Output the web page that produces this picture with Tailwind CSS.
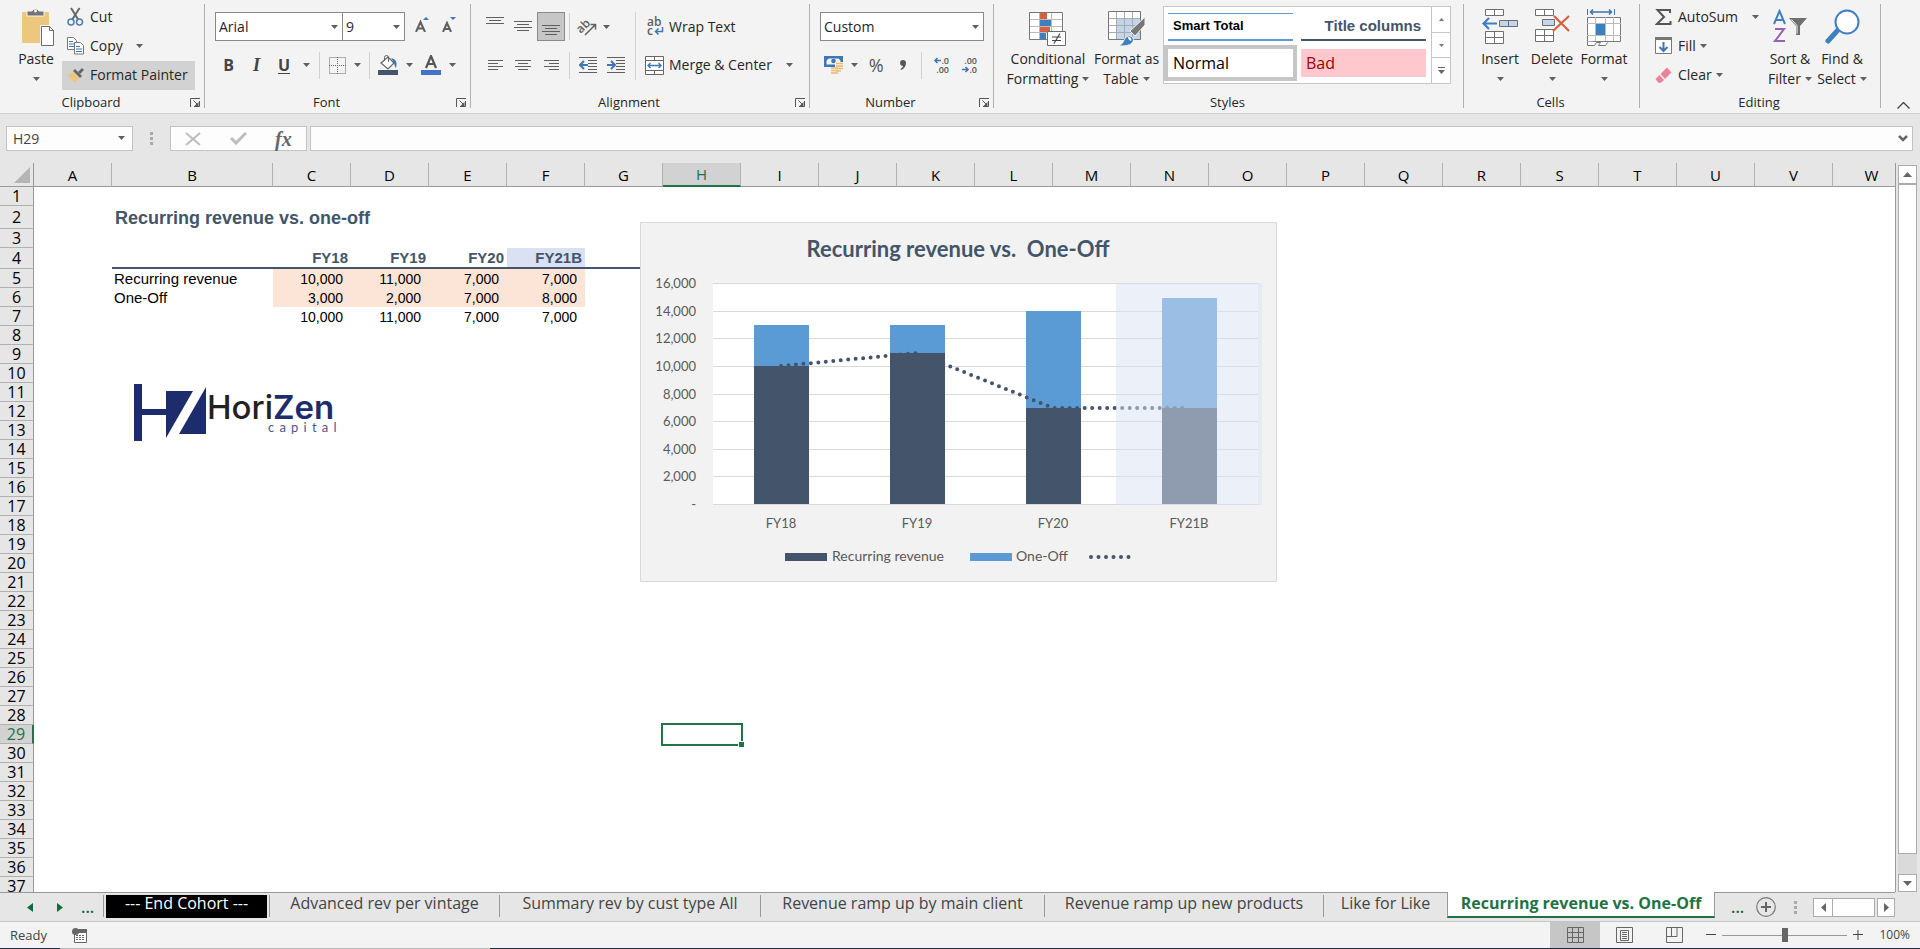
<!DOCTYPE html>
<html lang="en">
<head>
  <meta charset="UTF-8">
  <meta name="viewport" content="width=device-width, initial-scale=1.0">
  <script src="https://cdn.jsdelivr.net/npm/@tailwindcss/browser@4"></script>
  <title>Recurring revenue vs. One-Off</title>
</head>
<body class="h-screen flex flex-col overflow-hidden bg-[#e6e6e6] text-[#262626] text-sm font-['Open_Sans','Noto_Sans',sans-serif]">

  <!-- Shared symbols -->
  <svg class="hidden">
    <symbol id="caret" viewBox="0 0 7 4"><path d="M0 0h7L3.5 4z" fill="#5f5f5f"/></symbol>
    <symbol id="launcher" viewBox="0 0 10 9"><path d="M.5 9V.5H10M3.5 2.500l4 4M9.500 3v5.500H4" fill="none" stroke="#555"/><path d="M8.500 4v4h-4z" fill="#555"/></symbol>
  </svg>

  <!-- Ribbon -->
  <header class="shrink-0 flex h-[114px] bg-[#f3f3f3] border-b border-[#cfcfcf]">

    <!-- Clipboard -->
    <section class="w-[204px] shrink-0 flex flex-col pt-[3px]">
      <div class="flex h-[87px]">
        <button class="w-[62px] pl-2.5 flex flex-col items-center">
          <svg class="w-[36px] h-[46px]" viewBox="0 0 36 46">
            <rect x="4" y="9" width="27" height="31" rx="1" fill="#eec77e"/>
            <path d="M9 13V8h5a4 4 0 0 1 7 0h5v5z" fill="#737373" stroke="#f3f3f3"/>
            <circle cx="17.500" cy="8" r="1.500" fill="#f3f3f3"/>
            <path d="M22 22h11l5 5v17H22z" fill="#f3f3f3"/>
            <path d="M23.500 23.500h8l4 4v15h-12z" fill="#fff" stroke="#6b6b6b"/>
            <path d="M31.500 23.500v4h4" fill="none" stroke="#6b6b6b"/>
          </svg>
          <span class="leading-5">Paste</span>
          <span class="h-5 flex items-center"><svg class="w-[7px] h-1"><use href="#caret"/></svg></span>
        </button>
        <div class="w-[133px] flex flex-col">
          <button class="h-[29px] pb-0.5 pl-[5px] flex items-center gap-1.5">
            <svg class="w-[17px] h-[19px]" viewBox="0 0 17 19"><path d="M4 1l7.500 12M12.500 1L5 13" stroke="#666" stroke-width="2" fill="none"/><circle cx="4" cy="15" r="3" fill="none" stroke="#4a7fb5" stroke-width="1.500"/><circle cx="12.500" cy="15" r="3" fill="none" stroke="#4a7fb5" stroke-width="1.500"/></svg>
            Cut
          </button>
          <button class="h-[29px] pb-0.5 pl-[5px] flex items-center gap-1.5">
            <svg class="w-[17px] h-[19px]" viewBox="0 0 17 19"><path d="M.5 1.500h6l3 3v9h-9z" fill="#fff" stroke="#777"/><path d="M2 5.500h4M2 8h5M2 10.500h5" stroke="#3f76b5"/><path d="M7.500 6.500h6l3 3v8.500h-9z" fill="#fff" stroke="#777"/><path d="M9 10.500h4M9 13h6M9 15.500h6" stroke="#3f76b5"/></svg>
            Copy
            <svg class="w-[7px] h-1 ml-[7px]"><use href="#caret"/></svg>
          </button>
          <button class="h-[29px] pb-0.5 pl-[5px] flex items-center gap-1.5 bg-[#d2d2d2] whitespace-nowrap">
            <svg class="w-[17px] h-[17px]" viewBox="0 0 17 17"><path d="M0 9l6-3 6 6-4 5z" fill="#eec77e"/><path d="M6 5l2-2 7 7-2 2z" fill="#666"/><path d="M11 6l4-4 2 2-4 4z" fill="#666"/></svg>
            Format Painter
          </button>
        </div>
      </div>
      <div class="flex items-center h-[23px] pt-0.5 pr-1 text-[13px]"><span class="flex-1 text-center pr-2">Clipboard</span><button aria-label="Clipboard settings"><svg class="w-2.5 h-[9px]"><use href="#launcher"/></svg></button></div>
    </section>
    <div class="w-px h-[104px] mt-1 bg-[#b1b1b1]"></div>

    <!-- Font -->
    <section class="w-[265px] shrink-0 flex flex-col pt-[3px]">
      <div class="h-[87px] pl-2.5 pt-[9px] flex flex-col gap-2">
        <div class="flex h-[29px]">
          <div class="relative"><select aria-label="Font" class="appearance-none w-[128px] h-[29px] pl-[3px] bg-white border border-[#8a8a8a]"><option>Arial</option></select><svg class="absolute right-[5px] top-[13px] w-[7px] h-1 pointer-events-none"><use href="#caret"/></svg></div>
          <div class="relative"><select aria-label="Font size" class="appearance-none w-[62px] h-[29px] pl-[3px] bg-white border border-l-0 border-[#8a8a8a]"><option>9</option></select><svg class="absolute right-[5px] top-[13px] w-[7px] h-1 pointer-events-none"><use href="#caret"/></svg></div>
          <button class="w-[27px] flex items-center justify-center pl-1.5 pb-1" aria-label="Grow font"><svg class="w-[14px] h-[15px]" viewBox="0 0 14 15"><path d="M1 15L5.500 5l4.500 10M2.500 11.500h6" fill="none" stroke="#5f5f5f" stroke-width="2"/><path d="M8 3l3-3 3 3z" fill="#3f76b5"/></svg></button>
          <button class="w-[27px] flex items-center justify-center pl-1.5 pb-1" aria-label="Shrink font"><svg class="w-[14px] h-[15px]" viewBox="0 0 14 15"><path d="M1 15L5 6l4 9M2.500 12h5" fill="none" stroke="#5f5f5f" stroke-width="2"/><path d="M8 0h6l-3 3z" fill="#3f76b5"/></svg></button>
        </div>
        <div class="flex items-center h-[32px] text-base text-[#444]">
          <button class="w-[27px] font-bold">B</button>
          <button class="w-[29px] font-bold italic font-['Liberation_Serif',serif] text-lg">I</button>
          <button class="w-[26px] font-bold underline underline-offset-2">U</button>
          <button class="w-[18px] flex justify-center" aria-label="Underline options"><svg class="w-[7px] h-1"><use href="#caret"/></svg></button>
          <div class="w-px h-[27px] mx-1 bg-[#d2d2d2]"></div>
          <button class="w-[26px] flex justify-center" aria-label="Borders"><svg class="w-[17px] h-[17px]" viewBox="0 0 17 17"><path d="M.5 .5h16v16H.5zM8.500 0v17M0 8.500h17" fill="none" stroke="#666" stroke-dasharray="1 1"/></svg></button>
          <button class="w-[15px] flex justify-center" aria-label="Border options"><svg class="w-[7px] h-1"><use href="#caret"/></svg></button>
          <div class="w-px h-[27px] mx-1 bg-[#d2d2d2]"></div>
          <button class="w-[28px] flex justify-center" aria-label="Fill colour"><svg class="w-5 h-5" viewBox="0 0 20 20"><path d="M3 8l7-6 6 6-6 6z" fill="#fff" stroke="#666" stroke-width="1.200"/><path d="M6.500 6V2.500a2 2 0 0 1 4 0V7" fill="none" stroke="#666"/><path d="M13 3c5 1 6.500 4 5 10-1-1-2-4-2-5z" fill="#3f76b5"/><path d="M0 15h20v5H0z" fill="#44546a"/></svg></button>
          <button class="w-[15px] flex justify-center" aria-label="Fill colour options"><svg class="w-[7px] h-1"><use href="#caret"/></svg></button>
          <button class="w-[28px] flex justify-center" aria-label="Font colour"><svg class="w-5 h-5" viewBox="0 0 20 20"><path d="M5 13L10 1l5 12M6.500 9h7" fill="none" stroke="#555" stroke-width="2.200"/><path d="M0 15h20v5H0z" fill="#4472c4"/></svg></button>
          <button class="w-[14px] flex justify-center" aria-label="Font colour options"><svg class="w-[7px] h-1"><use href="#caret"/></svg></button>
        </div>
      </div>
      <div class="flex items-center h-[23px] pt-0.5 pr-1 text-[13px]"><span class="flex-1 text-center pr-2">Font</span><button aria-label="Font settings"><svg class="w-2.5 h-[9px]"><use href="#launcher"/></svg></button></div>
    </section>
    <div class="w-px h-[104px] mt-1 bg-[#b1b1b1]"></div>

    <!-- Alignment -->
    <section class="w-[338px] shrink-0 flex flex-col pt-[3px]">
      <div class="flex h-[87px] pl-2.5 pt-[9px]">
        <div class="flex flex-col gap-2.5">
          <div class="flex items-center h-[29px]">
            <button class="w-7 h-[29px] flex justify-center pt-[5px]" aria-label="Top align"><svg class="w-[18px] h-2" viewBox="0 0 18 8"><path d="M0 .5h18M3 3.500h12M0 6.500h18" stroke="#5f5f5f"/></svg></button>
            <button class="w-7 h-[29px] flex justify-center items-center" aria-label="Middle align"><svg class="w-[18px] h-[11px]" viewBox="0 0 18 11"><path d="M0 .5h18M3 3.500h12M0 6.500h18M3 9.500h12" stroke="#5f5f5f"/></svg></button>
            <button class="w-7 h-[29px] flex justify-center items-end pb-1 bg-[#c6c6c6] border border-[#8a8a8a]" aria-label="Bottom align"><svg class="w-[18px] h-[11px]" viewBox="0 0 18 11"><path d="M0 .5h18M3 3.500h12M0 6.500h18M3 9.500h12" stroke="#5f5f5f"/></svg></button>
            <div class="w-px h-[27px] mx-1 bg-[#d2d2d2]"></div>
            <button class="w-[26px] flex justify-center" aria-label="Orientation"><svg class="w-5 h-5 overflow-visible" viewBox="0 0 20 20"><text x="0" y="12" transform="rotate(-45 8 10)" font-size="12" font-weight="600" fill="#5f5f5f">ab</text><path d="M8 18L18 8M13.500 7.500H18.500V12.500" fill="none" stroke="#5f5f5f" stroke-width="1.500"/></svg></button>
            <button class="w-3 flex justify-center" aria-label="Orientation options"><svg class="w-[7px] h-1"><use href="#caret"/></svg></button>
          </div>
          <div class="flex items-center h-[28px]">
            <button class="w-7 flex justify-center" aria-label="Align left"><svg class="w-[15px] h-3" viewBox="0 0 15 12"><path d="M0 1.500h15M0 4.500h10M0 7.500h15M0 10.500h10" stroke="#5f5f5f"/></svg></button>
            <button class="w-7 flex justify-center" aria-label="Center"><svg class="w-4 h-3" viewBox="0 0 16 12"><path d="M0 1.500h16M3 4.500h10M0 7.500h16M3 10.500h10" stroke="#5f5f5f"/></svg></button>
            <button class="w-7 flex justify-center" aria-label="Align right"><svg class="w-[15px] h-3" viewBox="0 0 15 12"><path d="M0 1.500h15M5 4.500h10M0 7.500h15M5 10.500h10" stroke="#5f5f5f"/></svg></button>
            <div class="w-px h-[27px] mx-1 bg-[#d2d2d2]"></div>
            <button class="w-7 flex justify-center" aria-label="Decrease indent"><svg class="w-[18px] h-4" viewBox="0 0 18 16"><path d="M0 .5h18M9 3.500h9M9 6.500h9M9 9.500h9M9 12.500h9M0 15.500h18" stroke="#5f5f5f"/><path d="M9 8H1.500M5 4L1 8l4 4" fill="none" stroke="#3f76b5" stroke-width="2"/></svg></button>
            <button class="w-7 flex justify-center" aria-label="Increase indent"><svg class="w-[18px] h-4" viewBox="0 0 18 16"><path d="M0 .5h18M9 3.500h9M9 6.500h9M9 9.500h9M9 12.500h9M0 15.500h18" stroke="#5f5f5f"/><path d="M0 8h7M4 4l4 4-4 4" fill="none" stroke="#3f76b5" stroke-width="2"/></svg></button>
          </div>
        </div>
        <div class="w-px h-[68px] ml-[5px] mr-[9px] bg-[#d2d2d2]"></div>
        <div class="flex flex-col gap-2.5">
          <button class="flex items-center gap-1 h-[29px]">
            <svg class="w-5 h-5 overflow-visible" viewBox="0 0 20 20"><text x="2" y="9" font-size="12" font-weight="600" fill="#5f5f5f">ab</text><text x="2" y="18" font-size="12" font-weight="600" fill="#5f5f5f">c</text><path d="M17.500 10v4.500H11M13.500 11.500l-3 3 3 3" fill="none" stroke="#3f76b5" stroke-width="1.500"/></svg>
            Wrap Text
          </button>
          <button class="flex items-center gap-1 h-[28px]">
            <svg class="w-5 h-[19px]" viewBox="0 0 20 19"><path d="M.5 .5h18v18H.5z" fill="#fff" stroke="#666"/><path d="M0 4.500h19M0 14.500h19M9.500 0v4M9.500 15v4" stroke="#666"/><path d="M3 9.500h13M5.500 7L3 9.500 5.500 12M13.500 7l2.500 2.500-2.500 2.500" fill="none" stroke="#3f76b5" stroke-width="1.400"/></svg>
            Merge &amp; Center
            <svg class="w-[7px] h-1 ml-2.5"><use href="#caret"/></svg>
          </button>
        </div>
      </div>
      <div class="flex items-center h-[23px] pt-0.5 pr-1 text-[13px]"><span class="flex-1 text-center pr-2">Alignment</span><button aria-label="Alignment settings"><svg class="w-2.5 h-[9px]"><use href="#launcher"/></svg></button></div>
    </section>
    <div class="w-px h-[104px] mt-1 bg-[#b1b1b1]"></div>

    <!-- Number -->
    <section class="w-[183px] shrink-0 flex flex-col pt-[3px]">
      <div class="h-[87px] pl-2.5 pr-[9px] pt-[9px] flex flex-col gap-2.5">
        <div class="relative"><select aria-label="Number format" class="appearance-none w-full h-[29px] pl-[3px] bg-white border border-[#8a8a8a]"><option>Custom</option></select><svg class="absolute right-[5px] top-[13px] w-[7px] h-1 pointer-events-none"><use href="#caret"/></svg></div>
        <div class="flex items-center h-[28px]">
          <button class="w-7 flex justify-center" aria-label="Accounting format"><svg class="w-5 h-5" viewBox="0 0 20 20"><path d="M0 1h19v11H0z" fill="#3f76b5"/><path d="M2.500 3.500h14v6h-14z" fill="#f3f3f3"/><path d="M2 3l3 0-3 3zM17 3h-3l3 3z" fill="#3f76b5"/><circle cx="9.500" cy="6" r="2.300" fill="#3f76b5"/><path d="M11 7h9v10h-5v3H6v-8h5z" fill="#f3f3f3"/><path d="M12 8.500h7M12 11h7M12 13.500h7M12 16h5M7 13h7M7 15.500h7M7 18h7" stroke="#ecbd6b" stroke-width="1.600"/></svg></button>
          <button class="w-[14px] flex justify-center" aria-label="Accounting options"><svg class="w-[7px] h-1"><use href="#caret"/></svg></button>
          <button class="w-[29px] text-lg text-[#555]">%</button>
          <button class="w-[26px] flex justify-center" aria-label="Comma style"><svg class="w-[7px] h-[10px]" viewBox="0 0 7 10"><path d="M3 0a3 3 0 0 1 3 3c0 3-2 6-5 7l-.5-1c1.500-.8 2.500-2 2.500-3.200A2.900 2.900 0 1 1 3 0" fill="#555"/></svg></button>
          <div class="w-px h-[27px] ml-[5px] mr-1.5 bg-[#d2d2d2]"></div>
          <button class="w-[27px] flex justify-center" aria-label="Increase decimal"><svg class="w-4 h-[18px] overflow-visible" viewBox="0 0 16 18"><text x="15" y="8" text-anchor="end" font-size="9" font-weight="600" fill="#555">.0</text><text x="15" y="17" text-anchor="end" font-size="9" font-weight="600" fill="#555">.00</text><path d="M7 4.500H1M3.500 2L1 4.500 3.500 7" fill="none" stroke="#3f76b5" stroke-width="1.600"/></svg></button>
          <button class="w-[29px] flex justify-center" aria-label="Decrease decimal"><svg class="w-4 h-[18px] overflow-visible" viewBox="0 0 16 18"><text x="15" y="8" text-anchor="end" font-size="9" font-weight="600" fill="#555">.00</text><text x="15" y="17" text-anchor="end" font-size="9" font-weight="600" fill="#555">.0</text><path d="M0 13.500h6M3.500 11L6 13.500 3.500 16" fill="none" stroke="#3f76b5" stroke-width="1.600"/></svg></button>
        </div>
      </div>
      <div class="flex items-center h-[23px] pt-0.5 pr-1 text-[13px]"><span class="flex-1 text-center pr-2">Number</span><button aria-label="Number settings"><svg class="w-2.5 h-[9px]"><use href="#launcher"/></svg></button></div>
    </section>
    <div class="w-px h-[104px] mt-1 bg-[#b1b1b1]"></div>

    <!-- Styles -->
    <section class="w-[469px] shrink-0 flex flex-col pt-[3px]">
      <div class="flex h-[87px] pl-2.5">
        <button class="w-[88px] flex flex-col items-center whitespace-nowrap">
          <span class="h-[46px] pt-1 flex items-center"><svg class="w-[38px] h-9" viewBox="0 0 38 36"><path d="M.5 2.500h34v27H.5z" fill="#fff"/><path d="M11 2h7v7h-7zM11 16h10v7H11z" fill="#d8603f"/><path d="M11 9h11v7H11zM11 23h6v7h-6z" fill="#3f7fbf"/><path d="M0 9.500h34M0 16.500h34M0 22.500h34M10.500 2v28M22.500 2v28" stroke="#bbb"/><path d="M.5 2.500h33v27H.5z" fill="none" stroke="#777"/><path d="M18.500 21.500h18v14h-18z" fill="#fff" stroke="#6b6b6b"/><path d="M23 27h9M23 30.500h9M31 23.500l-6 10" stroke="#444" stroke-width="1.200"/></svg></span>
          <span class="leading-5">Conditional</span>
          <span class="leading-5 flex items-center gap-1">Formatting <svg class="w-[7px] h-1"><use href="#caret"/></svg></span>
        </button>
        <button class="w-[69px] flex flex-col items-center whitespace-nowrap">
          <span class="h-[46px] pt-1 flex items-center"><svg class="w-[38px] h-9" viewBox="0 0 38 36"><path d="M.5 1.500h32v28H.5z" fill="#fff"/><path d="M8 9h25v21H8z" fill="#c3d5ea"/><path d="M0 8.500h33M0 15.500h33M0 22.500h33M8.500 1v29M16.500 1v29M24.500 1v29" stroke="#aaa"/><path d="M.5 1.500h32v28H.5z" fill="none" stroke="#777"/><path d="M37 7v8L27 26l-5-5z" fill="#777" stroke="#f3f3f3"/><path d="M10 36c6-1 5-8 10-10 5-1 7 4 4 7-3 3-8 3-14 3z" fill="#3f7fbf" stroke="#f3f3f3"/><path d="M20 27c3 0 4 2 3 4-2-1-3-2-3-4" fill="#fff"/></svg></span>
          <span class="leading-5">Format as</span>
          <span class="leading-5 flex items-center gap-1">Table <svg class="w-[7px] h-1"><use href="#caret"/></svg></span>
        </button>
        <div class="flex h-[78px] mt-[3px] ml-0.5 bg-white border border-[#c6c6c6]">
          <div class="grid grid-cols-[125px_125px] grid-rows-[28px_28px] gap-2 pl-1 pt-1.5 pr-1">
            <button class="text-left pl-[5px] text-[13px] font-bold text-black font-['Liberation_Sans',sans-serif] border-t border-b-2 border-[#5b9bd5]">Smart Total</button>
            <button class="text-right pr-[5px] text-[15px] font-bold text-[#44546a] font-['Liberation_Sans',sans-serif] border-b-2 border-[#44546a]">Title columns</button>
            <button class="text-left pl-[5px] text-base text-black bg-white outline-4 outline-[#c6c6c6]">Normal</button>
            <button class="text-left pl-[5px] text-base text-[#9c0006] bg-[#ffc7ce]">Bad</button>
          </div>
          <div class="w-[19px] ml-px flex flex-col border-l border-[#c6c6c6] divide-y divide-[#c6c6c6]">
            <button class="flex-1 flex items-center justify-center" aria-label="Previous styles"><svg class="w-[5px] h-[3px]" viewBox="0 0 5 3"><path d="M0 3h5L2.500 0z" fill="#777"/></svg></button>
            <button class="flex-1 flex items-center justify-center" aria-label="Next styles"><svg class="w-[5px] h-[3px]" viewBox="0 0 5 3"><path d="M0 0h5L2.500 3z" fill="#777"/></svg></button>
            <button class="flex-1 flex items-center justify-center" aria-label="More styles"><svg class="w-[7px] h-[7px]" viewBox="0 0 7 7"><path d="M0 0h7v1H0zM0 3h7L3.500 7z" fill="#666"/></svg></button>
          </div>
        </div>
      </div>
      <div class="flex items-center justify-center h-[23px] pt-0.5 pr-0.5 text-[13px]">Styles</div>
    </section>
    <div class="w-px h-[104px] mt-1 bg-[#b1b1b1]"></div>

    <!-- Cells -->
    <section class="w-[175px] shrink-0 flex flex-col pt-[3px]">
      <div class="flex h-[87px] pl-2.5">
        <button class="w-[52px] flex flex-col items-center">
          <span class="h-[46px] pt-0.5 flex items-center"><svg class="w-9 h-9" viewBox="0 0 36 36"><g fill="#fff" stroke="#6f6f6f"><path d="M3.500 .5h18v6h-18zM12.500 .5v6M3.500 22.500h18v12h-18zM12.500 22.500v12M3.500 28.500h18"/><path d="M17.500 11.500h18v6h-18zM26.500 11.500v6" fill="#c3d5ea"/></g><path d="M15 14.500H2M7 9l-5.500 5.500L7 20" fill="none" stroke="#3f7fbf" stroke-width="2.200"/></svg></span>
          <span class="leading-5">Insert</span>
          <span class="h-5 flex items-center"><svg class="w-[7px] h-1"><use href="#caret"/></svg></span>
        </button>
        <button class="w-[52px] flex flex-col items-center">
          <span class="h-[46px] pt-0.5 flex items-center"><svg class="w-9 h-9" viewBox="0 0 36 36"><g fill="#fff" stroke="#6f6f6f"><path d="M1.500 .5h18v6h-18zM10.500 .5v6M1.500 20.500h18v12h-18zM10.500 20.500v12M1.500 26.500h18"/><path d="M8.500 10.500h12v6h-12z" fill="#c3d5ea"/></g><path d="M20 7l15 15M35 7L19 22" fill="none" stroke="#d8603f" stroke-width="2.200"/></svg></span>
          <span class="leading-5">Delete</span>
          <span class="h-5 flex items-center"><svg class="w-[7px] h-1"><use href="#caret"/></svg></span>
        </button>
        <button class="w-[52px] flex flex-col items-center">
          <span class="h-[46px] pt-1 flex items-center"><svg class="w-9 h-10" viewBox="0 0 36 40"><path d="M1.500 9.500h33v24h-33z" fill="#fff" stroke="#777"/><path d="M1 15.500h34M1 27.500h34M9.500 9v24M19.500 9v24M27.500 9v24" stroke="#bbb"/><path d="M1.500 33.500v4h7l2-3h4l-2 3h7l2-3" fill="#fff" stroke="#777"/><path d="M10 16h9v11h-9z" fill="#3f7fbf"/><path d="M1.500 1v6M28.500 1v6" stroke="#3f76b5"/><path d="M4 4h22M7 1.500L4.500 4 7 6.500M23 1.500L25.500 4 23 6.500" fill="none" stroke="#3f76b5" stroke-width="1.600"/></svg></span>
          <span class="leading-5">Format</span>
          <span class="h-5 flex items-center"><svg class="w-[7px] h-1"><use href="#caret"/></svg></span>
        </button>
      </div>
      <div class="flex items-center justify-center h-[23px] pt-0.5 pr-0.5 text-[13px]">Cells</div>
    </section>
    <div class="w-px h-[104px] mt-1 bg-[#b1b1b1]"></div>

    <!-- Editing -->
    <section class="w-[240px] shrink-0 flex flex-col pt-[3px]">
      <div class="flex h-[87px] pl-[15px] whitespace-nowrap">
        <div class="w-[109px] flex flex-col">
          <button class="h-[29px] pb-0.5 flex items-center gap-1.5">
            <svg class="w-[17px] h-4" viewBox="0 0 17 16"><path d="M15 4V1H2.500L9 8l-7 7h13.500v-3" fill="none" stroke="#555" stroke-width="2"/></svg>
            AutoSum
            <svg class="w-[7px] h-1 ml-2"><use href="#caret"/></svg>
          </button>
          <button class="h-[29px] pb-0.5 flex items-center gap-1.5">
            <svg class="w-[17px] h-[17px]" viewBox="0 0 17 17"><path d="M.5 .5h16v16H.5z" fill="#fff" stroke="#777"/><path d="M0 0h17v3H0z" fill="#777"/><path d="M8.500 5v9M4.500 10l4 4 4-4" fill="none" stroke="#3f76b5" stroke-width="2"/></svg>
            Fill
            <svg class="w-[7px] h-1 -ml-0.5"><use href="#caret"/></svg>
          </button>
          <button class="h-[29px] pb-0.5 flex items-center gap-1.5">
            <svg class="w-[17px] h-4" viewBox="0 0 17 16"><path d="M5.500 7L12 .5l4.500 5L10 12z" fill="#e8839a"/><path d="M4.500 8l4.500 5-2.500 2.500L3.500 16 .5 12z" fill="#e8839a"/></svg>
            Clear
            <svg class="w-[7px] h-1 -ml-0.5"><use href="#caret"/></svg>
          </button>
        </div>
        <button class="w-[52px] flex flex-col items-center">
          <span class="h-[46px] flex items-center"><svg class="w-[36px] h-9" viewBox="0 0 36 36"><path d="M2 16L7.500 3 13 16M4 12h7" fill="none" stroke="#3f7fbf" stroke-width="2"/><path d="M3 21h9L3 33h10" fill="none" stroke="#9563b5" stroke-width="2"/><path d="M17 10h18l-7 8v9h-4v-9z" fill="#6f6f6f"/><path d="M19.500 11.500l5.500 6v8" fill="none" stroke="#f3f3f3"/></svg></span>
          <span class="leading-5">Sort &amp;</span>
          <span class="leading-5 flex items-center gap-1">Filter <svg class="w-[7px] h-1"><use href="#caret"/></svg></span>
        </button>
        <button class="w-[52px] flex flex-col items-center">
          <span class="h-[46px] flex items-center"><svg class="w-9 h-9" viewBox="0 0 36 36"><path d="M14 22L4 33" stroke="#3f7fbf" stroke-width="5" stroke-linecap="round"/><circle cx="23" cy="14" r="11.500" fill="#fff" stroke="#3f7fbf" stroke-width="2"/></svg></span>
          <span class="leading-5">Find &amp;</span>
          <span class="leading-5 flex items-center gap-1">Select <svg class="w-[7px] h-1"><use href="#caret"/></svg></span>
        </button>
      </div>
      <div class="flex items-center justify-center h-[23px] pt-0.5 pr-0.5 text-[13px]">Editing</div>
    </section>
    <div class="w-px h-[104px] mt-1 bg-[#b1b1b1]"></div>
    <button class="ml-auto mr-2.5 self-end pb-1" aria-label="Collapse ribbon"><svg class="w-[13px] h-[7px]" viewBox="0 0 13 7"><path d="M.5 6.500l6-6 6 6" fill="none" stroke="#444" stroke-width="1.300"/></svg></button>
  </header>

  <!-- Formula bar -->
  <div class="shrink-0 flex h-[49px] pt-3 pl-1.5 pr-[7px]">
    <div class="relative">
      <input aria-label="Name box" value="H29" class="w-[127px] h-[25px] pl-1.5 bg-[#fdfdfd] border border-[#c3c3c3] text-[#444]">
      <svg class="absolute right-2 top-[10px] w-[7px] h-1"><use href="#caret"/></svg>
    </div>
    <svg class="w-[3px] h-[13px] mt-1.5 ml-[17px] mr-[17px]" viewBox="0 0 3 13"><path d="M0 0h3v3H0zM0 5h3v3H0zM0 10h3v3H0z" fill="#a9a9a9"/></svg>
    <div class="flex items-center justify-around w-[137px] h-[25px] bg-[#fdfdfd] border border-[#c3c3c3]">
      <button aria-label="Cancel"><svg class="w-4 h-[14px]" viewBox="0 0 16 14"><path d="M1 1l14 12M15 1L1 13" stroke="#bdbdbd" stroke-width="2"/></svg></button>
      <button aria-label="Enter"><svg class="w-[17px] h-[13px]" viewBox="0 0 17 13"><path d="M1 6l5 5L16 1" fill="none" stroke="#bdbdbd" stroke-width="3"/></svg></button>
      <button class="italic font-bold text-xl leading-5 text-[#666] font-['Liberation_Serif',serif]">fx</button>
    </div>
    <div class="relative flex-1 ml-[3px]">
      <input aria-label="Formula" class="w-full h-[25px] pl-1.5 bg-[#fdfdfd] border border-[#c3c3c3]">
      <svg class="absolute right-[5px] top-[9px] w-[10px] h-[7px]" viewBox="0 0 10 7"><path d="M1 1l4 4 4-4" fill="none" stroke="#666" stroke-width="2.500"/></svg>
    </div>
  </div>

  <!-- Sheet -->
  <main class="flex flex-1 min-h-0">
    <div class="relative flex-1 overflow-hidden bg-white border-r border-[#999]">
      <table class="table-fixed w-[1911px] border-separate border-spacing-0 text-black">
        <thead><tr id="columns" class="h-6 bg-[#e6e6e6]"></tr></thead>
        <tbody id="rows" class="font-['Liberation_Sans',sans-serif]"></tbody>
      </table>

      <!-- Logo placed on the sheet -->
      <svg class="absolute left-[133px] top-[219px] w-[210px] h-[62px]" viewBox="0 0 210 62" role="img" aria-label="HoriZen capital">
        <g fill="#1d2c6b"><path d="M1 2h8v25h24V9h27L33 56V33H9v26H1zM73 5v47H46z"/></g>
        <text x="74" y="37" font-family="Inter" font-size="33" font-weight="500" fill="#222">Hori<tspan fill="#1d2c6b" font-weight="600">Zen</tspan></text>
        <text x="135" y="50" font-family="Lato" font-size="13" class="tracking-[0.4em]" fill="#4a568a">capital</text>
      </svg>

      <!-- Chart placed on the sheet -->
      <svg class="absolute left-[640px] top-[59px] w-[637px] h-[360px]" viewBox="0 0 637 360" font-family="Lato" font-size="13" fill="#595959">
        <path d="M.5 .5h636v359H.5z" fill="#f2f2f2" stroke="#d9d9d9"/>
        <text x="318" y="35" text-anchor="middle" font-family="Lato" font-size="22" font-weight="700" fill="#44546a" xml:space="preserve">Recurring revenue vs.  One-Off</text>
        <path d="M73 61h545v221H73z" fill="#fff"/>
        <path d="M73 61.500h545M73 89.500h545M73 116.500h545M73 144.500h545M73 172.500h545M73 199.500h545M73 227.500h545M73 254.500h545M73 282.500h545" stroke="#d9d9d9"/>
        <g text-anchor="end">
          <text x="56" y="66">16,000</text><text x="56" y="94">14,000</text><text x="56" y="121">12,000</text>
          <text x="56" y="149">10,000</text><text x="56" y="177">8,000</text><text x="56" y="204">6,000</text>
          <text x="56" y="232">4,000</text><text x="56" y="259">2,000</text><text x="56" y="287">-</text>
        </g>
        <path d="M114 103h55v41h-55zM250 103h55v28h-55zM386 89h55v97h-55zM522 76h55v110h-55z" fill="#5b9bd5"/>
        <path d="M141 144l136-13 136 55h136" fill="none" stroke="#44546a" stroke-width="4" stroke-linecap="round" stroke-dasharray="0 7.500"/>
        <path d="M114 144h55v138h-55zM250 131h55v151h-55zM386 186h55v96h-55zM522 186h55v96h-55z" fill="#44546a"/>
        <path d="M476 61h146v222H476z" fill="#d9e2f3" fill-opacity=".5"/>
        <g text-anchor="middle">
          <text x="141" y="306">FY18</text><text x="277" y="306">FY19</text><text x="413" y="306">FY20</text><text x="549" y="306">FY21B</text>
        </g>
        <g font-size="14">
          <path d="M145 331h42v8h-42z" fill="#44546a"/><text x="192" y="339">Recurring revenue</text>
          <path d="M330 331h42v8h-42z" fill="#5b9bd5"/><text x="376" y="339">One-Off</text>
        </g>
        <path d="M451 335h40" stroke="#44546a" stroke-width="4" stroke-linecap="round" stroke-dasharray="0 7.500"/>
      </svg>
    </div>

    <!-- Vertical scroll bar -->
    <div class="w-[24px] pl-0.5 pr-[3px] pt-0.5 flex flex-col">
      <button class="h-[19px] flex items-center justify-center bg-white border border-[#ababab]" aria-label="Scroll up"><svg class="w-[9px] h-[5px]" viewBox="0 0 9 5"><path d="M0 5h9L4.500 0z" fill="#666"/></svg></button>
      <div class="flex-1 bg-[#dadada] pb-5"><div class="h-full bg-white border border-[#ababab]"></div></div>
      <button class="h-[18px] flex items-center justify-center bg-white border border-[#ababab]" aria-label="Scroll down"><svg class="w-[9px] h-[5px]" viewBox="0 0 9 5"><path d="M0 0h9L4.500 5z" fill="#666"/></svg></button>
    </div>
  </main>

  <!-- Sheet tabs -->
  <nav class="shrink-0 flex h-[30px] border-b border-[#c6c6c6] text-base text-[#444] whitespace-nowrap">
    <div class="w-[103px] flex items-center border-t border-[#999] text-[#0b6a3a] font-semibold">
      <button class="ml-[27px]" aria-label="Previous sheet"><svg class="w-[6px] h-[9px]" viewBox="0 0 6 9"><path d="M6 0v9L0 4.500z" fill="#0f6b3c"/></svg></button>
      <button class="ml-6" aria-label="Next sheet"><svg class="w-[6px] h-[9px]" viewBox="0 0 6 9"><path d="M0 0v9l6-4.500z" fill="#0f6b3c"/></svg></button>
      <button class="ml-[18px]">...</button>
    </div>
    <div class="flex border-t border-[#999] pt-0.5">
      <div class="h-[22px] border-l border-[#999]"></div>
      <a href="#" class="w-[161px] h-[23px] ml-0.5 leading-4 text-center bg-black text-white">--- End Cohort ---</a>
      <div class="h-[22px] ml-0.5 border-l border-[#999]"></div>
      <a href="#" class="w-[229px] leading-4 text-center">Advanced rev per vintage</a>
      <div class="h-[22px] border-l border-[#999]"></div>
      <a href="#" class="w-[260px] leading-4 text-center">Summary rev by cust type All</a>
      <div class="h-[22px] border-l border-[#999]"></div>
      <a href="#" class="w-[283px] leading-4 text-center">Revenue ramp up by main client</a>
      <div class="h-[22px] border-l border-[#999]"></div>
      <a href="#" class="w-[278px] leading-4 text-center">Revenue ramp up new products</a>
      <div class="h-[22px] border-l border-[#999]"></div>
      <a href="#" class="w-[123px] leading-4 text-center">Like for Like</a>
    </div>
    <a href="#" class="w-[268px] h-[26px] pt-[3px] leading-4 text-center font-bold text-[#217346] bg-white border-x border-x-[#999] border-b-2 border-b-[#217346]">Recurring revenue vs. One-Off</a>
    <div class="flex-1 flex items-center border-t border-[#999]">
      <button class="ml-4 font-semibold text-[#0b6a3a]">...</button>
      <button class="ml-3" aria-label="New sheet"><svg class="w-5 h-5" viewBox="0 0 20 20"><circle cx="10" cy="10" r="9.300" fill="none" stroke="#777" stroke-width="1.200"/><path d="M10 5v10M5 10h10" stroke="#666" stroke-width="2"/></svg></button>
      <svg class="w-[3px] h-[13px] ml-[18px]" viewBox="0 0 3 13"><path d="M0 0h3v3H0zM0 5h3v3H0zM0 10h3v3H0z" fill="#a9a9a9"/></svg>
      <div class="ml-auto flex">
        <button class="w-[20px] h-[19px] flex items-center justify-center bg-white border border-[#ababab]" aria-label="Scroll left"><svg class="w-[5px] h-[9px]" viewBox="0 0 5 9"><path d="M5 0v9L0 4.500z" fill="#666"/></svg></button>
        <div class="w-[42px] bg-white border border-l-0 border-[#ababab]"></div>
        <button class="w-[18px] h-[19px] ml-0.5 flex items-center justify-center bg-white border border-[#ababab]" aria-label="Scroll right"><svg class="w-[5px] h-[9px]" viewBox="0 0 5 9"><path d="M0 0v9l5-4.500z" fill="#666"/></svg></button>
      </div>
    </div>
    <div class="w-[25px]"></div>
  </nav>

  <!-- Status bar -->
  <footer class="shrink-0 flex items-center h-[26px] pl-2.5 pr-2.5 bg-[#f3f3f3] text-[13px] text-[#444]">
    <span>Ready</span>
    <button class="ml-[25px]" aria-label="Record macro"><svg class="w-[15px] h-[15px]" viewBox="0 0 15 15"><path d="M2.500 3.500h12v11h-12z" fill="#fff" stroke="#666"/><path d="M6 1h9v4H6z" fill="#666"/><circle cx="3.500" cy="3.500" r="3.500" fill="#666"/><path d="M4 7.500h9M4 9.500h9M4 11.500h9" stroke="#666" stroke-dasharray="2 1"/></svg></button>
    <div class="ml-auto flex self-stretch">
      <button class="w-[50px] flex items-center justify-center bg-[#c6c6c6]" aria-label="Normal view"><svg class="w-[17px] h-4" viewBox="0 0 17 16"><path d="M.5 .5h16v15H.5zM0 5.500h17M0 10.500h17M5.500 0v16M11.500 0v16" fill="none" stroke="#666"/></svg></button>
      <button class="w-[49px] flex items-center justify-center" aria-label="Page layout view"><svg class="w-[17px] h-4" viewBox="0 0 17 16"><path d="M.5 .5h16v15H.5zM4.500 3.500h8v10h-8zM6 5.500h5M6 7.500h5M6 9.500h5M6 11.500h5" fill="none" stroke="#666"/></svg></button>
      <button class="w-[50px] flex items-center justify-center" aria-label="Page break view"><svg class="w-[17px] h-4" viewBox="0 0 17 16"><path d="M.5 .5h16v15H.5zM.5 9.500h10.500V.5M5.500 .5v9" fill="none" stroke="#666"/></svg></button>
    </div>
    <button class="ml-[7px] text-[#444]" aria-label="Zoom out"><svg class="w-[10px] h-[10px]" viewBox="0 0 10 10"><path d="M0 4.500h10" stroke="#444"/></svg></button>
    <div class="relative w-[125px] h-5 mx-[6px] flex items-center">
      <input type="range" min="10" max="190" value="100" aria-label="Zoom" class="absolute inset-0 w-full opacity-0">
      <div class="w-full h-px bg-[#999]"></div>
      <div class="absolute left-[60px] top-[3px] w-[6px] h-[14px] bg-[#666]"></div>
    </div>
    <button aria-label="Zoom in"><svg class="w-[10px] h-[10px]" viewBox="0 0 10 10"><path d="M0 4.500h10M5 0v10" stroke="#444"/></svg></button>
    <span class="ml-4 text-xs">100%</span>
  </footer>
  <div class="shrink-0 flex h-px bg-[#1b2e45]"><div class="w-[60px]"></div><div class="w-[430px] bg-[#b8b8b8]"></div></div>

  <script>
    const columns = "ABCDEFGHIJKLMNOPQRSTUVW".split("");
    const heights = { 2: "h-[23px]", 4: "h-[21px]" };
    const cells = {
      B2: "Recurring revenue vs. one-off",
      C4: "FY18", D4: "FY19", E4: "FY20", F4: "FY21B",
      B5: "Recurring revenue", C5: "10,000", D5: "11,000", E5: "7,000", F5: "7,000",
      B6: "One-Off", C6: "3,000", D6: "2,000", E6: "7,000", F6: "8,000",
      C7: "10,000", D7: "11,000", E7: "7,000", F7: "7,000"
    };

    // Column letters
    let head = `<th class="w-[34px] border-r border-b border-[#999]"><svg class="w-4 h-4 ml-[14px]" viewBox="0 0 16 16"><path d="M16 0v16H0z" fill="#b5b5b5"/></svg></th>`;
    columns.forEach((col) => {
      const width = col === "B" ? "w-[161px]" : "w-[78px]";
      const look = col === "H" ? "bg-[#d2d2d2] text-[#217346] border-b-2 border-b-[#217346]" : "border-b border-b-[#999]";
      head += `<th class="${width} ${look} font-normal text-[15px] leading-[20px] border-r border-r-[#b1b1b1]">${col}</th>`;
    });
    document.getElementById("columns").innerHTML = head;

    function cellClass(col, row) {
      let style = "";
      if (row === 2 && col === "B") return "pl-[3px] text-lg leading-[20px] font-bold text-[#44546a] whitespace-nowrap overflow-visible";
      if (row === 4) {
        style = "pr-[3px] text-right text-[15px] leading-[18px] font-bold text-[#44546a]";
        if (col >= "B" && col <= "G") style += " border-b-2 border-[#44546a]";
        if (col === "F") style += " bg-[#d9e1f2]";
        return style;
      }
      if (col === "B") return "pl-0.5 text-[15px] leading-[18px] whitespace-nowrap";
      if (col >= "C" && col <= "F") {
        style = "pr-2 text-right text-sm leading-[18px]";
        if (row === 5 || row === 6) style += " bg-[#fce4d6]";
      }
      return style;
    }

    // Rows 1 to 37
    let body = "";
    for (let row = 1; row <= 37; row++) {
      const active = row === 29;
      const look = active ? "bg-[#d2d2d2] text-[#217346] border-r-2 border-r-[#217346]" : "bg-[#e6e6e6] border-r border-r-[#999]";
      body += `<tr class="${heights[row] || "h-[19px]"}"><th class="${look} border-b border-b-[#b1b1b1] font-normal text-base leading-[18px] font-['Open_Sans','Noto_Sans',sans-serif]">${row}</th>`;
      columns.forEach((col) => {
        if (active && col === "H") {
          body += `<td class="relative"><div class="absolute -inset-0.5 border-2 border-[#217346]"></div><div class="absolute -right-[3px] -bottom-[3px] w-[6px] h-[6px] bg-[#217346] border-t border-l border-white"></div></td>`;
        } else {
          body += `<td class="${cellClass(col, row)}">${cells[col + row] || ""}</td>`;
        }
      });
      body += "</tr>";
    }
    document.getElementById("rows").innerHTML = body;
  </script>
</body>
</html>
